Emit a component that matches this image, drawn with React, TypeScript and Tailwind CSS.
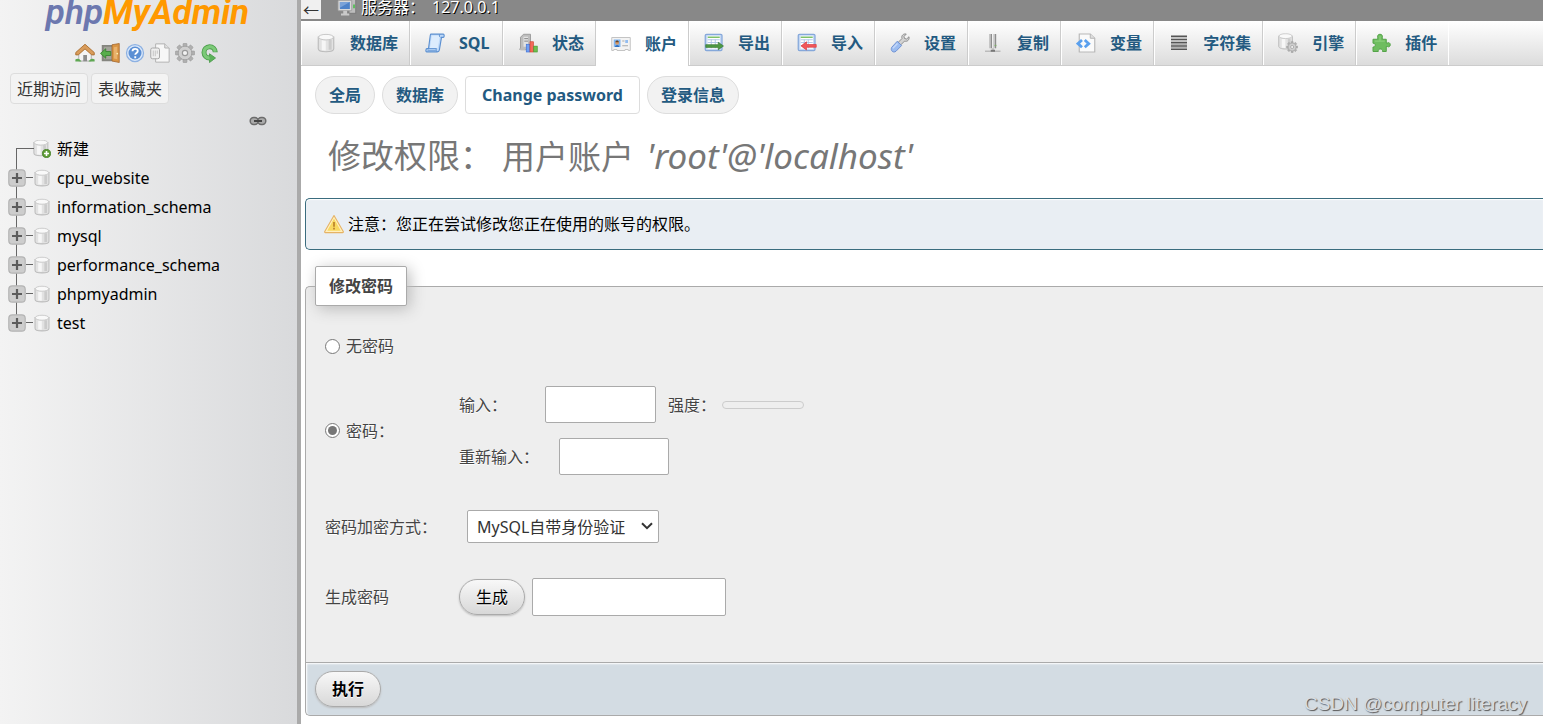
import { useState } from 'react';
import type { ReactNode } from 'react';

function Svg({ children, className = 'h-5 w-5' }: { children: ReactNode; className?: string }) {
  return (
    <svg viewBox="0 0 16 16" className={`shrink-0 ${className}`} aria-hidden="true">
      {children}
    </svg>
  );
}

const GEAR_TEETH = [0, 45, 90, 135];

function Gear({ cx, cy, r }: { cx: number; cy: number; r: number }) {
  return (
    <g>
      {GEAR_TEETH.map((angle) => (
        <rect
          key={angle}
          x={cx - r * 0.2}
          y={cy - r}
          width={r * 0.4}
          height={r * 2}
          rx={r * 0.1}
          fill="#b0b0b0"
          stroke="#979797"
          strokeWidth={r * 0.06}
          transform={`rotate(${angle} ${cx} ${cy})`}
        />
      ))}
      <circle cx={cx} cy={cy} r={r * 0.7} fill="#cfcfcf" stroke="#a2a2a2" strokeWidth={r * 0.1} />
      <circle cx={cx} cy={cy} r={r * 0.27} fill="#f2f2f2" stroke="#9a9a9a" strokeWidth={r * 0.12} />
    </g>
  );
}

function Cylinder() {
  return (
    <g>
      <path d="M1.800 3.200v9.400c0 1.500 2.600 2.400 6.200 2.400s6.200-.9 6.200-2.400V3.200z" fill="#e2e2e2" stroke="#bcbcbc" strokeWidth=".9" />
      <path d="M5.400 5.800v8M7 6v8" stroke="#f6f6f6" strokeWidth="1.600" />
      <path d="M11.300 5.600v7.800" stroke="#cbcbcb" strokeWidth="2.400" />
      <ellipse cx="8" cy="3.300" rx="6" ry="2.200" fill="#f9f9f9" stroke="#c2c2c2" strokeWidth=".7" />
    </g>
  );
}

function DatabaseIcon({ className }: { className?: string }) {
  return <Svg className={className}><Cylinder /></Svg>;
}

function NewDatabaseIcon() {
  return (
    <Svg className="h-[18px] w-[18px]">
      <g transform="translate(-1 -1)"><Cylinder /></g>
      <circle cx="12" cy="12" r="3.6" fill="#5f9c36" stroke="#3c7a1c" strokeWidth=".7" />
      <path d="M12 9.800v4.400M9.800 12h4.400" stroke="#fff" strokeWidth="1.4" />
    </Svg>
  );
}

function SqlIcon() {
  return (
    <Svg>
      <path d="M4.600.9h10c.9 0 1.100 2.400 0 2.600h-1.400l-1.700 10.100c-.2 1-.8 1.500-1.700 1.500H1.400c-1 0-.9-2.500.2-2.600h1.200L4.200 2c.1-.7.2-1.100.4-1.100z" fill="#bdd8f8" stroke="#5b8fd0" strokeWidth=".9" />
      <path d="M5.400 2h6.600l-1.800 10.400H3.900z" fill="#dcecfd" />
      <path d="M12 1c-.8.6-.6 2 .3 2.500M1.600 12.500h7.600c-.5.7-.3 2 .4 2.500" fill="none" stroke="#5b8fd0" strokeWidth=".8" />
      <path d="M2 14h7" stroke="#7fa9dd" strokeWidth="1" />
    </Svg>
  );
}

function StatusIcon() {
  return (
    <Svg>
      <path d="M2 3.400 4.400 1H10v12.400H2z" fill="#bdbdbd" stroke="#979797" strokeWidth=".7" />
      <path d="M4.400 3H8v8H4.400z" fill="#e2e2e2" />
      <path d="M5 4.500h3M5 6.500h3" stroke="#8a8a8a" strokeWidth=".8" />
      <path d="M.8 13h5" stroke="#bbb" strokeWidth="1.2" />
      <rect x="6.6" y="9" width="2.8" height="6.2" fill="#6fa0f5" stroke="#3c6fd4" strokeWidth=".5" />
      <rect x="9.6" y="7" width="2.8" height="8.2" fill="#f36a5a" stroke="#d0402f" strokeWidth=".5" />
      <rect x="12.600" y="10.500" width="2.8" height="4.7" fill="#6fc04f" stroke="#3f962b" strokeWidth=".5" />
    </Svg>
  );
}

function UsersIcon() {
  return (
    <Svg>
      <path d="M.6 2.800h14.800v10.400h-1.600v-.8h-2.600v.8H4.800v-.8H2.200v.8H.6z" fill="#f3f3f3" stroke="#c4c4c4" strokeWidth=".8" />
      <rect x="2.2" y="4.4" width="5.4" height="6" fill="#7fb4f0" />
      <path d="M3.200 10.400c0-2.200 3.400-2.200 3.400 0z" fill="#2e6fc0" />
      <circle cx="4.9" cy="7" r="1.5" fill="#d99a66" />
      <path d="M3.500 6.600c.2-1.800 2.600-1.800 2.800 0z" fill="#6b4423" />
      <path d="M9 5.600h1.800M9 9.400h4.600" stroke="#aaa" strokeWidth=".9" />
      <path d="M11.400 4.800h2.200v2.400h-2.200z" fill="#93bdf0" />
    </Svg>
  );
}

function Sheet() {
  return (
    <g>
      <rect x="1" y="1" width="13.4" height="13" rx="1" fill="#c5d8f3" stroke="#85a8da" strokeWidth="1" />
      <path d="M2.800 2.200h10v10.400h-10z" fill="#fff" />
      <path d="M3 3.400h9.600" stroke="#7ec26a" strokeWidth="1.2" />
      <path d="M3 5.400h9.600M3 7.600h9.600M3 10h9.600M5.800 5.200v7M9 5.200v7" stroke="#a9c2e5" strokeWidth=".7" />
    </g>
  );
}

function ExportIcon() {
  return (
    <Svg>
      <Sheet />
      <path d="M1.400 9.300h10V7.400l4.200 3-4.200 3v-1.900h-10z" fill="#4d9a44" stroke="#34742d" strokeWidth=".5" />
    </Svg>
  );
}

function ImportIcon() {
  return (
    <Svg>
      <Sheet />
      <path d="M15.400 9.200H7.600V7l-4.400 3.300 4.400 3.300v-2.200h7.800z" fill="#f0575a" stroke="#dc3438" strokeWidth=".5" />
    </Svg>
  );
}

function SettingsIcon() {
  return (
    <Svg>
      <path d="m6.600 7.400 3-3C8.800 2.200 10.600.4 13 .8l-1.800 2 .4 1.600 1.700.4 1.900-1.800c.5 2.600-1.500 4.200-3.600 3.500l-3 3z" fill="#d3d3d3" stroke="#8f8f8f" strokeWidth=".8" />
      <path d="M5.800 6.600 9.300 10l-4.500 4.600c-2.300 1.800-4.900-.8-3.300-3.300z" fill="#9bbcf0" stroke="#6f92d4" strokeWidth=".8" />
      <path d="m6 8.400-3.700 3.800" stroke="#c4d7f8" strokeWidth="1.2" />
    </Svg>
  );
}

function ReplicationIcon() {
  return (
    <Svg>
      <path d="M5.800.8v11.400M9.200.8v11.400" stroke="#c6c6c6" strokeWidth="2" />
      <path d="M6.700.8v11.400M10.100.8v11.400" stroke="#8a8a8a" strokeWidth=".9" />
      <path d="M9.300 10h1.400" stroke="#7dae66" strokeWidth="1" />
      <path d="M1.600 14.600h12.400M8 12v2.600" stroke="#bbb" strokeWidth="1.1" />
      <path d="M6.200 14.200h3.400" stroke="#777" strokeWidth="1.6" />
    </Svg>
  );
}

function VariablesIcon() {
  return (
    <Svg>
      <path d="M2.600.8h8.800l3.600 3.400v11H2.600z" fill="#fafafa" stroke="#b7b7b7" strokeWidth=".9" />
      <path d="M11.400.8v3.400H15" fill="#e0e0e0" stroke="#b7b7b7" strokeWidth=".8" />
      <path d="M4.800 5.600 1.600 8.500l3.200 2.900M7 5.600l3.200 2.900L7 11.400" fill="none" stroke="#5aa0ee" strokeWidth="2.200" />
    </Svg>
  );
}

function CharsetIcon() {
  return (
    <Svg>
      <path d="M1.600 2.600h12.800M1.600 5.200h12.800M1.600 7.800h12.800M1.600 10.400h12.800M1.600 13h12.800" stroke="#555" strokeWidth="1.2" />
      <path d="M1.600 3.900h12.800M1.600 6.500h12.800M1.600 9.100h12.800M1.600 11.700h12.800" stroke="#aaa" strokeWidth=".8" />
    </Svg>
  );
}

function EngineIcon() {
  return (
    <Svg>
      <g transform="translate(-1 -.4) scale(.88)"><Cylinder /></g>
      <Gear cx={11.3} cy={11.2} r={4.5} />
    </Svg>
  );
}

function PluginIcon() {
  return (
    <Svg>
      <path
        d="M1.600 5h3.800V3.800C4.800 2.400 5.600 1 7.200 1S9.600 2.400 9 3.800V5h3.200v3h.9c1-.7 2.300-.1 2.300 1.400s-1.300 2.100-2.300 1.400h-.9v4H9.200c.2-1.400-.5-2-1.700-2s-1.900.6-1.700 2H1.600v-3.600c1.200.1 1.800-.5 1.800-1.500s-.6-1.600-1.800-1.500z"
        fill="#6fbd60"
        stroke="#54a348"
        strokeWidth=".8"
      />
      <path d="M3 6.400h8M7.200 2.600v4" stroke="#8bce7b" strokeWidth="1" />
    </Svg>
  );
}

function ServerIcon() {
  return (
    <Svg>
      <rect x="9.600" y="1.400" width="5.400" height="11.600" fill="#bdbdbd" stroke="#777" strokeWidth=".7" />
      <path d="M13.600 6v3" stroke="#3fbf3f" strokeWidth="1.200" />
      <rect x=".8" y="2.600" width="11" height="8.400" rx=".6" fill="#d8d8d8" stroke="#9a9a9a" strokeWidth=".7" />
      <rect x="2.300" y="4" width="8" height="5.600" fill="#4e82c8" />
      <path d="M2.300 4h8L2.300 8.600z" fill="#7aa2d8" />
      <path d="M5 11h3v2.200H5zM3.200 13.200h6.600v1.600H3.200z" fill="#c9c9c9" />
    </Svg>
  );
}

function HomeIcon() {
  return (
    <Svg>
      <path d="M3 8 8 3.600 13 8v6.400H3z" fill="#f4f4f4" stroke="#999" strokeWidth=".6" />
      <path d="M6.600 9.600h3v5h-3z" fill="#8c8c8c" />
      <path d="M.3 13.200c1-.8 2.400-.8 3.300-.2l1.600 1.800H.3zM15.700 13.200c-1-.8-2.400-.8-3.300-.2l-1.600 1.800h4.900z" fill="#5fa853" />
      <path d="M8 1 .6 7.600v1.900h2L8 4.700l5.400 4.800h2V7.600z" fill="#d99c5b" stroke="#a86b2c" strokeWidth=".7" />
    </Svg>
  );
}

function ExitIcon() {
  return (
    <Svg>
      <path d="M1.400 1.600h11v13h-11z" fill="#85857f" />
      <path d="M3 3h7v10H3z" fill="#a3a39a" />
      <path d="M9.600 1.400 15.400.4v15.200l-5.800-1.200z" fill="#d99545" stroke="#a2642a" strokeWidth=".6" />
      <path d="M11 3.400l2.800-.5v10l-2.800-.5z" fill="#e9b26c" />
      <circle cx="13.800" cy="8.400" r=".7" fill="#fff0b0" />
      <path d="M.4 8.300 4.600 4.600v2.200h4v3.200h-4v2.200z" fill="#58ad4c" stroke="#2f7d27" strokeWidth=".6" />
    </Svg>
  );
}

function HelpIcon() {
  return (
    <Svg>
      <circle cx="8" cy="8" r="6.800" fill="#dce9fa" stroke="#8db1e2" strokeWidth="1" />
      <circle cx="8" cy="8" r="5.200" fill="#5b8fd4" />
      <path d="M6 6.600c0-2.600 4.200-2.500 4.200-.2 0 1.600-2 1.500-2 3M8.200 10.600v1.500" fill="none" stroke="#fff" strokeWidth="1.500" />
    </Svg>
  );
}

function DocsIcon() {
  return (
    <Svg>
      <path d="M4.500.7h7.300L15.300 4v11.300H4.500z" fill="#f7f7f7" stroke="#b3b3b3" strokeWidth=".8" />
      <path d="M11.800.7V4h3.500" fill="#e3e3e3" stroke="#b3b3b3" strokeWidth=".8" />
      <rect x=".6" y="4" width="7" height="8.600" rx="1.400" fill="#efefef" stroke="#a8a8a8" strokeWidth=".8" />
      <path d="M2.600 6v4.600M4.200 6v4.600M5.800 6v2.600" stroke="#c4c4c4" strokeWidth=".8" />
    </Svg>
  );
}

function ReloadIcon() {
  return (
    <Svg>
      <path d="M12.200 7.400A4.500 4.500 0 1 0 7.800 12" fill="none" stroke="#4c9d4b" strokeWidth="4" />
      <path d="M7.600 8.600 12.400 12 7.600 15.600z" fill="#5cb25a" stroke="#4c9d4b" strokeWidth=".7" />
      <path d="M12.200 7A4.500 4.500 0 1 0 7.800 12" fill="none" stroke="#7cca78" strokeWidth="2.600" />
    </Svg>
  );
}

function LinkIcon() {
  return (
    <svg viewBox="0 0 18 10" className="h-[10px] w-[18px]" aria-hidden="true">
      <rect x="1.200" y="1.500" width="8" height="7" rx="3.400" fill="#aaa" stroke="#6c6c6c" strokeWidth="1.500" />
      <rect x="8.800" y="1.500" width="8" height="7" rx="3.400" fill="#aaa" stroke="#6c6c6c" strokeWidth="1.500" />
      <path d="M5 5h8" stroke="#444" strokeWidth="2" />
    </svg>
  );
}

function WarningIcon() {
  return (
    <Svg>
      <path d="M8 1.200 15.400 14c.2.500 0 .9-.5.9H1.100c-.5 0-.7-.4-.5-.9z" fill="#fff0c0" stroke="#e6b365" strokeWidth=".9" strokeLinejoin="round" />
      <path d="M8 3.600 13.400 13.300H2.600z" fill="#f8d860" />
      <path d="M8 6.400v3.800M8 11v1.400" stroke="#c08a2e" strokeWidth="1.500" />
    </Svg>
  );
}

function PlusIcon() {
  return (
    <svg viewBox="0 0 18 18" className="h-[18px] w-[18px]" aria-hidden="true">
      <rect x=".8" y=".8" width="16.400" height="16.400" rx="3.500" fill="#cdcdcd" stroke="#b4b4b4" strokeWidth="1.200" />
      <path d="M9 4v10M4 9h10" stroke="#5c5c5c" strokeWidth="2.200" />
    </svg>
  );
}

const shortcuts = [
  { label: '主页', Icon: HomeIcon },
  { label: '退出', Icon: ExitIcon },
  { label: '帮助', Icon: HelpIcon },
  { label: '文档', Icon: DocsIcon },
  { label: '导航面板设置', Icon: () => <Svg><Gear cx={8} cy={8} r={7.8} /></Svg> },
  { label: '刷新', Icon: ReloadIcon },
];

const databases = ['cpu_website', 'information_schema', 'mysql', 'performance_schema', 'phpmyadmin', 'test'];

const tabs = [
  { label: '数据库', Icon: DatabaseIcon },
  { label: 'SQL', Icon: SqlIcon },
  { label: '状态', Icon: StatusIcon },
  { label: '账户', Icon: UsersIcon },
  { label: '导出', Icon: ExportIcon },
  { label: '导入', Icon: ImportIcon },
  { label: '设置', Icon: SettingsIcon },
  { label: '复制', Icon: ReplicationIcon },
  { label: '变量', Icon: VariablesIcon },
  { label: '字符集', Icon: CharsetIcon },
  { label: '引擎', Icon: EngineIcon },
  { label: '插件', Icon: PluginIcon },
];

const subTabs = ['全局', '数据库', 'Change password', '登录信息'];

const inputClass = 'rounded-[2px] border border-[#aaa] bg-white px-2 outline-none';
const buttonClass =
  'h-9 rounded-full border border-[#aaa] bg-linear-to-b from-[#f8f8f8] to-[#d8d8d8] px-4 text-black shadow-[0_1px_2px_#bbb] [text-shadow:0_1px_0_#fff]';

function Sidebar() {
  return (
    <aside className="w-[301px] shrink-0 border-r-4 border-[#aaa] bg-linear-to-r from-[#f3f3f3] to-[#d9dadc]">
      <a href="#home" className="flex h-[42px] justify-center pr-[2px] font-[Roboto] text-[35px] leading-[26px] font-bold text-[#f90] italic">
        <span className="font-semibold text-[#6c78af]">php</span>MyAdmin
      </a>
      <nav className="flex justify-center gap-[5px] pt-px pr-[2px]">
        {shortcuts.map(({ label, Icon }) => (
          <a key={label} href="#nav" aria-label={label}><Icon /></a>
        ))}
      </nav>
      <div className="mt-[10px] flex gap-[3px] pl-[10px]">
        <button type="button" className="h-[31px] rounded-[4px] border border-[#ddd] bg-[#f3f3f3] px-[6px] text-[#333]">近期访问</button>
        <button type="button" className="h-[31px] rounded-[4px] border border-[#ddd] bg-[#f3f3f3] px-[6px] text-[#333]">表收藏夹</button>
      </div>
      <div className="mt-3 flex justify-end pr-[30px]"><LinkIcon /></div>

      <ul className="mt-2 pl-2 text-black">
        <li className="relative flex h-[29px] items-center">
          <span className="absolute top-[14px] left-2 h-[15px] w-[18px] border-t border-l border-[#666]" />
          <span className="ml-[25px] flex w-6"><NewDatabaseIcon /></span>
          <a href="#new">新建</a>
        </li>
        {databases.map((name, index) => (
          <li key={name} className="relative flex h-[29px] items-center">
            <span className={`absolute top-0 left-2 w-px bg-[#666] ${index === databases.length - 1 ? 'h-[14px]' : 'h-[29px]'}`} />
            <button type="button" aria-label={`展开 ${name}`} className="relative"><PlusIcon /></button>
            <span className="h-px w-[7px] bg-[#666]" />
            <span className="flex w-6"><DatabaseIcon className="h-[18px] w-[18px]" /></span>
            <a href="#db">{name}</a>
          </li>
        ))}
      </ul>
    </aside>
  );
}

function ServerBar() {
  return (
    <div className="flex h-[21px] items-start overflow-hidden bg-[#888] text-white">
      <button type="button" className="h-[19px] w-5 bg-[#f0f0f0] text-center leading-[12px] text-[#333]">←</button>
      <a href="#server" className="ml-4 flex h-[13px] items-center gap-1 [text-shadow:1px_1px_0_#000]">
        <ServerIcon />
        <span className="flex gap-[7px] whitespace-nowrap"><span>服务器：</span><span>127.0.0.1</span></span>
      </a>
    </div>
  );
}

function TopMenu({ active, onSelect }: { active: string; onSelect: (label: string) => void }) {
  return (
    <nav className="flex h-[45px] border-b border-[#ccc] bg-linear-to-b from-white to-[#dcdcdc]">
      {tabs.map(({ label, Icon }) => (
        <button
          key={label}
          type="button"
          onClick={() => onSelect(label)}
          className={`flex min-w-[93px] shrink-0 items-center gap-[14px] border-r border-l border-r-[#ccc] border-l-white pr-[11px] pl-[14px] font-bold whitespace-nowrap text-[#235a81] last:border-r-white ${
            active === label ? '-mb-px bg-white' : ''
          }`}
        >
          <Icon />
          {label}
        </button>
      ))}
    </nav>
  );
}

function SubMenu() {
  return (
    <nav className="flex gap-[7px] pt-[10px] pl-[14px] font-bold text-[#235a81]">
      {subTabs.map((label) => (
        <a
          key={label}
          href="#sub"
          className={`flex h-[38px] items-center border border-[#ddd] ${
            label === 'Change password' ? 'rounded-[4px] bg-white px-4' : 'rounded-full bg-[#f2f2f2] px-[13px]'
          }`}
        >
          {label}
        </a>
      ))}
    </nav>
  );
}

function PasswordForm() {
  const [mode, setMode] = useState<'none' | 'keep'>('keep');

  return (
    <form className="mt-4 ml-1" onSubmit={(event) => event.preventDefault()}>
      <fieldset className="rounded-tl-[5px] border-t border-l border-[#aaa] bg-[#eee] text-[#444] [text-shadow:0_1px_0_#fff]">
        <legend className="ml-[9px] flex h-10 items-center rounded-[2px] border border-[#aaa] bg-white px-[13px] font-bold shadow-[3px_3px_15px_#bbb]">
          修改密码
        </legend>
        <div className="px-[19px] pt-7 pb-[46px]">
          <label className="flex h-6 items-center gap-[6px]">
            <input type="radio" name="nopass" className="h-[15px] w-[15px] accent-[#767676]" checked={mode === 'none'} onChange={() => setMode('none')} />
            无密码
          </label>

          <div className="mt-7 flex items-center">
            <label className="flex w-[134px] items-center gap-[6px]">
              <input type="radio" name="nopass" className="h-[15px] w-[15px] accent-[#767676]" checked={mode === 'keep'} onChange={() => setMode('keep')} />
              密码：
            </label>
            <div className="grid gap-[15px]">
              <div className="flex items-center">
                <label htmlFor="password" className="w-[86px]">输入：</label>
                <input id="password" type="password" className={`h-[37px] w-[111px] ${inputClass}`} />
                <span className="ml-3 w-[54px]">强度：</span>
                <span className="h-2 w-[82px] rounded-[4px] border border-[#ccc]" />
              </div>
              <div className="flex items-center">
                <label htmlFor="retype" className="w-[100px]">重新输入：</label>
                <input id="retype" type="password" className={`h-[37px] w-[110px] ${inputClass}`} />
              </div>
            </div>
          </div>

          <div className="mt-[35px] flex items-center">
            <label htmlFor="plugin" className="w-[142px]">密码加密方式：</label>
            <div className="relative">
              <select id="plugin" className="h-[33px] w-48 appearance-none rounded-[2px] border border-[#aaa] bg-white px-[9px] text-[#333]">
                <option>MySQL自带身份验证</option>
              </select>
              <svg viewBox="0 0 12 8" className="pointer-events-none absolute top-3 right-[6px] h-2 w-3" aria-hidden="true">
                <path d="m1 1.200 5 5 5-5" fill="none" stroke="#333" strokeWidth="2" />
              </svg>
            </div>
          </div>

          <div className="mt-[35px] flex items-center">
            <label htmlFor="generated" className="w-[134px]">生成密码</label>
            <button type="button" className={`mr-[7px] ${buttonClass}`}>生成</button>
            <input id="generated" type="text" className={`h-[38px] w-[194px] ${inputClass}`} />
          </div>
        </div>
      </fieldset>
      <div className="flex h-[54px] items-center rounded-bl-[5px] border-t border-b border-l border-[#aaa] bg-[#d3dce3] pl-[9px] shadow-[inset_1px_1px_2px_#fff]">
        <button type="submit" className={`font-bold ${buttonClass}`}>执行</button>
      </div>
    </form>
  );
}

export default function App() {
  const [activeTab, setActiveTab] = useState('账户');

  return (
    <div className="relative flex min-h-screen overflow-hidden bg-white font-['Noto_Sans','Noto_Sans_CJK_SC',sans-serif] text-base text-[#444]">
      <Sidebar />
      <main className="min-w-0 flex-1">
        <ServerBar />
        <TopMenu active={activeTab} onSelect={setActiveTab} />
        <SubMenu />
        <h1 className="flex h-[84px] items-center gap-[9px] pl-[27px] text-[33px] font-normal whitespace-nowrap text-[#777]">
          <span>修改权限：</span>
          <span>用户账户 <i className="ml-1 text-[35px]">'root'@'localhost'</i></span>
        </h1>
        <div className="ml-1 flex h-[52px] items-center gap-1 rounded-l-[5px] border border-r-0 border-[#3a6c7e] bg-[#e9eef3] pl-[18px] text-black shadow-[inset_0_1px_1px_#fff]">
          <WarningIcon />
          注意：您正在尝试修改您正在使用的账号的权限。
        </div>
        <PasswordForm />
      </main>
      <div className="pointer-events-none absolute right-4 bottom-[6px] font-['Liberation_Sans',sans-serif] text-[19px] text-[#d8dde1] [text-shadow:1px_1px_1px_#555]">
        CSDN @computer literacy
      </div>
    </div>
  );
}
